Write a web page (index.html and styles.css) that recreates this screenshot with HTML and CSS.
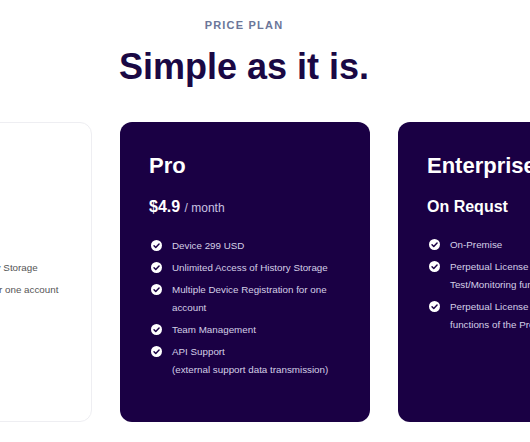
FILE: index.html
```html
<!doctype html>
<html lang="en">

<head>
    <meta charset="UTF-8">
    <meta name="viewport" content="width=device-width, initial-scale=1.0">
    <title>Price Plan</title>
    <link rel="stylesheet" href="styles.css">
</head>

<body>
    <section class="pricing">
        <p class="eyebrow">PRICE PLAN</p>
        <h1>Simple as it is.</h1>

        <div class="track">
            <div class="card light">
                <h2>Basic</h2>
                <p class="price">Free</p>
                <ul>
                    <li>Device 199 USD</li>
                    <li>Partial Access of History Storage</li>
                    <li>1 Device Registration for one account</li>
                </ul>
            </div>

            <div class="card">
                <h2>Pro</h2>
                <p class="price">$4.9 <span>/ month</span></p>
                <ul>
                    <li>Device 299 USD</li>
                    <li>Unlimited Access of History Storage</li>
                    <li>Multiple Device Registration for one account</li>
                    <li>Team Management</li>
                    <li>API Support<br>(external support data transmission)</li>
                </ul>
            </div>

            <div class="card">
                <h2>Enterprise</h2>
                <p class="price">On Requst</p>
                <ul>
                    <li>On-Premise</li>
                    <li>Perpetual License for<br>Test/Monitoring functions</li>
                    <li>Perpetual License for all<br>functions of the Pro plan</li>
                </ul>
            </div>
        </div>
    </section>
</body>

</html>
```

FILE: styles.css
```css
* {
    font-family: "Liberation Sans", Arial, sans-serif;
    box-sizing: border-box;
}

body {
    background-color: #fff;
    margin: 0;
    overflow: hidden;
}

.pricing {
    width: 488px;
    display: flex;
    flex-direction: column;
    align-items: center;
}

.eyebrow {
    margin: 19px 0 0;
    font-size: 11px;
    line-height: 13px;
    font-weight: bold;
    letter-spacing: 1.2px;
    color: #6b7699;
}

h1 {
    margin: 13px 0 0;
    font-size: 36px;
    line-height: 44px;
    color: #1a0844;
}

.track {
    display: flex;
    gap: 28px;
    margin-top: 33px;
    margin-left: -158px;
    align-self: flex-start;
}

.card {
    flex: 0 0 250px;
    height: 300px;
    background: #1a0044;
    border-radius: 12px;
    padding: 31px 40px 0 29px;
    color: #fff;
    overflow: hidden;
}

.card.light {
    background: #fff;
    border: 1px solid #eeeef2;
    padding-right: 20px;
    color: #333;
}

h2 {
    margin: 0;
    font-size: 22px;
    line-height: 26px;
    font-weight: bold;
    white-space: nowrap;
}

.price {
    margin: 17px 0 0;
    font-size: 16px;
    line-height: 22px;
    font-weight: bold;
    white-space: nowrap;
}

.price span {
    font-size: 12px;
    font-weight: normal;
    color: #c9c2e2;
}

ul {
    list-style: none;
    margin: 18px 0 0;
    padding: 0;
}

li {
    position: relative;
    padding-left: 23px;
    margin-bottom: 4px;
    font-size: 9.8px;
    line-height: 18px;
    color: #d4cfe6;
    white-space: nowrap;
}

.card:nth-child(2) li {
    white-space: normal;
}

.light li {
    color: #555;
}

li::before {
    content: "";
    position: absolute;
    left: 2px;
    top: 3px;
    width: 11px;
    height: 11px;
    border-radius: 50%;
    background: #fff url("data:image/svg+xml,%3Csvg xmlns='http://www.w3.org/2000/svg' viewBox='0 0 12 12'%3E%3Cpath d='M3.3 6.2l1.9 1.9 3.6-3.8' fill='none' stroke='%231a0044' stroke-width='1.6' stroke-linecap='round' stroke-linejoin='round'/%3E%3C/svg%3E") center / 11px 11px no-repeat;
}

.light li::before {
    background-color: #1a0044;
}
```
